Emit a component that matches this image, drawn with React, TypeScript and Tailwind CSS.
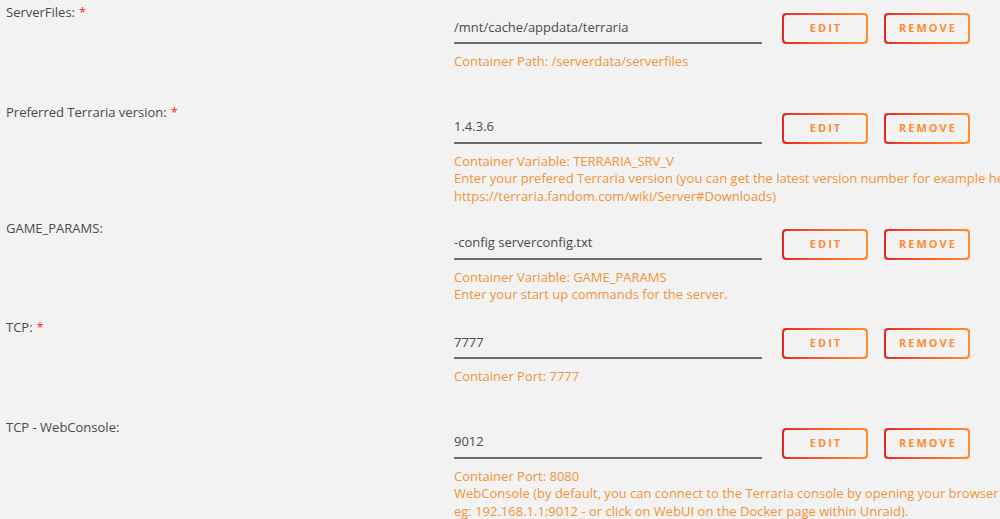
const rows = [
  {
    label: "ServerFiles:",
    required: true,
    value: "/mnt/cache/appdata/terraria",
    desc: ["Container Path: /serverdata/serverfiles"],
  },
  {
    label: "Preferred Terraria version:",
    required: true,
    value: "1.4.3.6",
    desc: [
      "Container Variable: TERRARIA_SRV_V",
      "Enter your prefered Terraria version (you can get the latest version number for example here:",
      "https://terraria.fandom.com/wiki/Server#Downloads)",
    ],
  },
  {
    label: "GAME_PARAMS:",
    required: false,
    value: "-config serverconfig.txt",
    desc: ["Container Variable: GAME_PARAMS", "Enter your start up commands for the server."],
  },
  {
    label: "TCP:",
    required: true,
    value: "7777",
    desc: ["Container Port: 7777"],
  },
  {
    label: "TCP - WebConsole:",
    required: false,
    value: "9012",
    desc: [
      "Container Port: 8080",
      "WebConsole (by default, you can connect to the Terraria console by opening your browser and go to:",
      "eg: 192.168.1.1:9012 - or click on WebUI on the Docker page within Unraid).",
    ],
  },
];

function GradButton({ children }: { children: string }) {
  return (
    <div className="w-[86px] h-[31px] rounded-[4px] bg-gradient-to-r from-[#e22828] to-[#ff8c2f] p-[2px]">
      <div className="w-full h-full rounded-[3px] bg-[#f2f2f2] flex items-center justify-center text-[11px] font-bold tracking-[2px] text-[#ff8c2f] pl-[2px]">
        {children}
      </div>
    </div>
  );
}

export default function App() {
  return (
    <div
      className="w-[1000px] h-[519px] overflow-hidden bg-[#f2f2f2] pt-[3px] pl-[6px]"
      style={{ fontFamily: '"Open Sans", "Noto Sans", sans-serif' }}
    >
      {rows.map((row, i) => (
        <div key={i} className="flex mb-[13.5px]">
          {/* label */}
          <div className="w-[448px] shrink-0 text-[13px] leading-[18px] text-[#4a4a4a]">
            {row.label}
            {row.required && <span className="text-[#f22] ml-[4px]">*</span>}
          </div>

          {/* value + actions */}
          <div className="pt-[10px]">
            <div className="flex items-start">
              <div className="w-[308px] h-[31px] border-b-2 border-[#6b6b6b] flex items-center text-[13px] text-[#4a4a4a]">
                {row.value}
              </div>
              <div className="ml-[20px]">
                <GradButton>EDIT</GradButton>
              </div>
              <div className="ml-[16px]">
                <GradButton>REMOVE</GradButton>
              </div>
            </div>
            <div className="mt-[9px] min-h-[36px] text-[13px] leading-[17.5px] text-[#f0943a] whitespace-nowrap">
              {row.desc.map((d, j) => (
                <div key={j}>{d}</div>
              ))}
            </div>
          </div>
        </div>
      ))}
    </div>
  );
}
